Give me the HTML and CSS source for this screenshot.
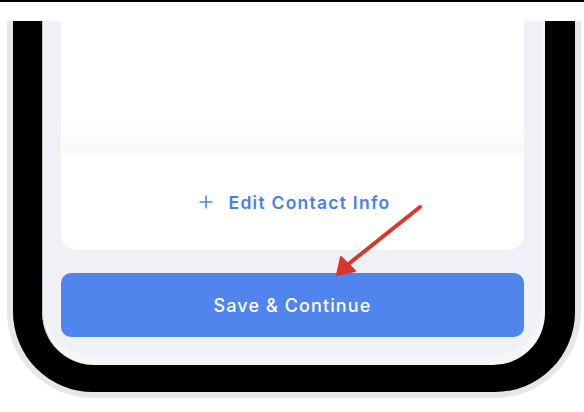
FILE: index.html
```html
<!DOCTYPE html>
<html>
<head>
<meta charset="utf-8">
<link rel="stylesheet" href="styles.css">
</head>
<body>
<div class="topline"></div>
<div class="stage">
  <div class="device">
    <div class="bezel-inner">
      <div class="screen">
        <div class="card">
          <div class="fade"></div>
          <div class="edit-row">
            <svg class="plus" width="14" height="14" viewBox="0 0 14 14"><path d="M7 0.5v13M0.5 7h13" stroke="#4f84ec" stroke-width="1.6" fill="none"/></svg>
            <span class="edit-text">Edit Contact Info</span>
          </div>
        </div>
        <button class="save">Save &amp; Continue</button>
      </div>
    </div>
  </div>
  <svg class="arrow" width="584" height="412" viewBox="0 0 584 412">
    <line x1="420" y1="207" x2="346" y2="266" stroke="#d8382c" stroke-width="4" stroke-linecap="round"/>
    <polygon points="337,275 341,257 355,271" fill="#d8382c" stroke="#d8382c" stroke-width="2" stroke-linejoin="round"/>
  </svg>
</div>
</body>
</html>
```

FILE: styles.css
```css
html, body {
  margin: 0;
  padding: 0;
  background: #ffffff;
  width: 584px;
  height: 412px;
  overflow: hidden;
}
.topline {
  height: 2px;
  background: #000;
}
.stage {
  padding-top: 19px;
}
.device {
  margin-left: 7px;
  width: 574px;
  height: 377px;
  box-sizing: border-box;
  border: 6px solid #e7e7e7;
  border-top: 0;
  border-radius: 0 0 86px 86px;
  background: #000;
  padding: 0 30px 27px 29px;
}
.bezel-inner {
  height: 100%;
  box-sizing: border-box;
  background: #f6f6f6;
  border-left: 1px solid #c9bfbf;
  padding: 0 4px 10px 0;
  border-radius: 0 0 52px 52px;
}
.screen {
  height: 100%;
  box-sizing: border-box;
  background: #f0f1f6;
  border-radius: 0 0 46px 46px;
  padding: 0 17px 18px 18px;
  display: flex;
  flex-direction: column;
  gap: 23px;
}
.card {
  height: 229px;
  flex: none;
  background: #fff;
  border-radius: 0 0 16px 16px;
  display: flex;
  flex-direction: column;
  align-items: center;
}
.fade {
  align-self: stretch;
  margin: 97px 0 0 2px;
  height: 35px;
  background: linear-gradient(#ffffff, #f7f8f8);
}
.edit-row {
  margin-top: 38px;
  height: 22px;
  display: flex;
  align-items: center;
  gap: 16px;
  margin-left: 4px;
}
.plus {
  display: block;
}
.edit-text {
  font-family: "Inter", sans-serif;
  font-weight: 600;
  font-size: 17.5px;
  letter-spacing: 1.25px;
  color: #4b7fe8;
}
.save {
  height: 64px;
  flex: none;
  border: 0;
  border-radius: 10px;
  background: #4f85ec;
  color: #fff;
  font-family: "Inter", sans-serif;
  font-weight: 500;
  font-size: 18px;
  letter-spacing: 1.1px;
  padding: 0;
}
.arrow {
  position: absolute;
  left: 0;
  top: 0;
  pointer-events: none;
}
```
